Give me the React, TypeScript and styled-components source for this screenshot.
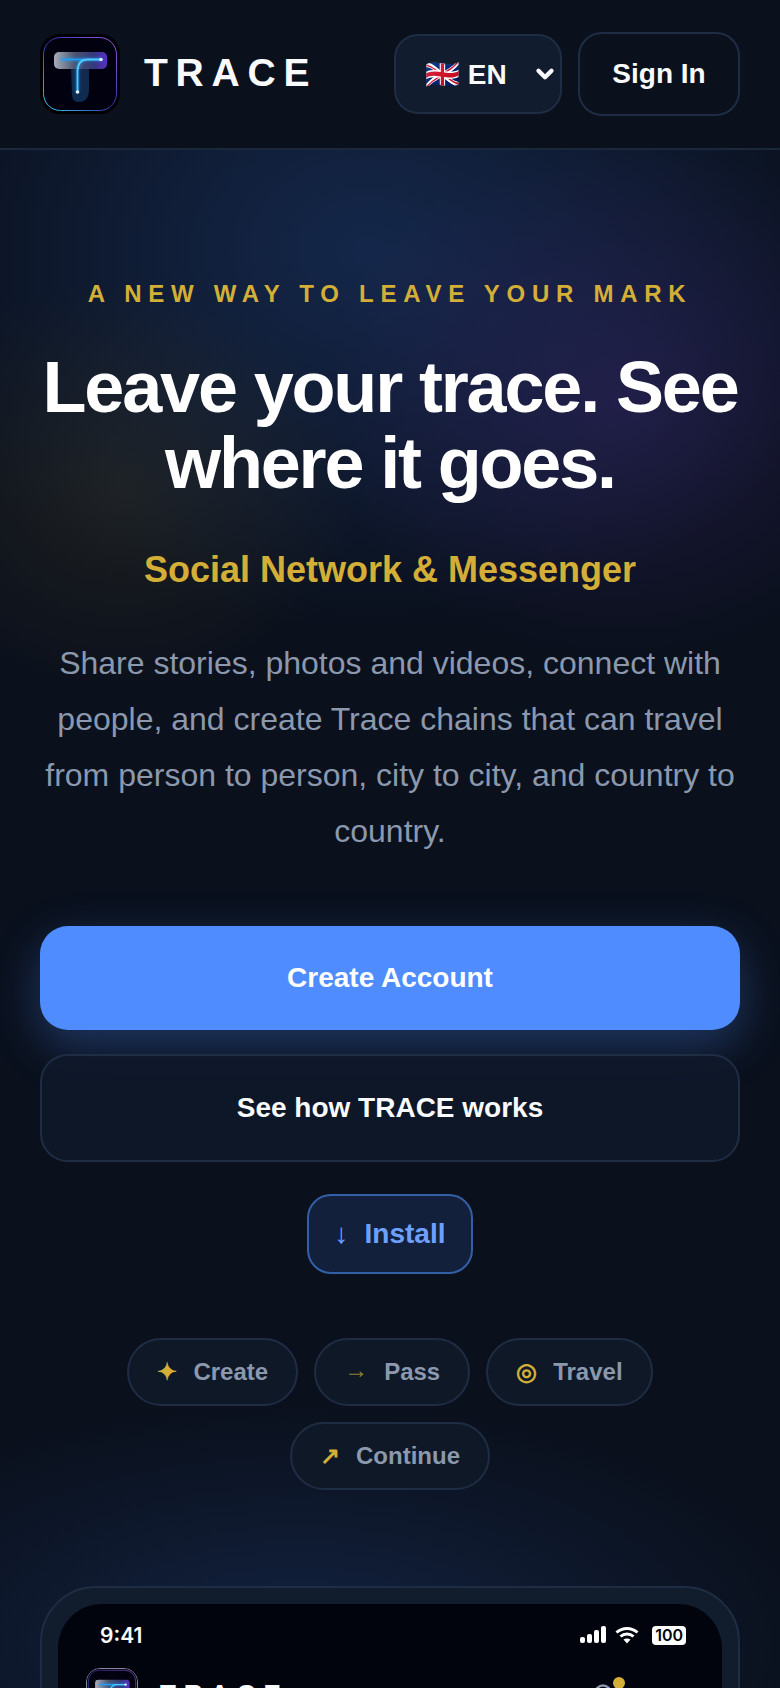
import React from "react";
import styled, { createGlobalStyle } from "styled-components";
import { Bell, ChevronDown, Menu } from "lucide-react";

const GlobalStyle = createGlobalStyle`
  html, body {
    margin: 0;
    padding: 0;
    background: #0a101c;
    font-family: "Liberation Sans", Arial, sans-serif;
  }
  * {
    box-sizing: border-box;
  }
`;

const Page = styled.div`
  width: 780px;
  height: 1688px;
  overflow: hidden;
  color: #f8fafc;
  background:
    radial-gradient(240px 210px at 120px 490px, rgba(72, 66, 40, 0.3), transparent 100%),
    radial-gradient(300px 260px at 620px 400px, rgba(60, 40, 112, 0.42), transparent 100%),
    radial-gradient(500px 380px at 370px 250px, rgba(24, 48, 92, 0.72), transparent 100%),
    radial-gradient(520px 240px at 300px 1640px, rgba(24, 46, 88, 0.6), transparent 100%),
    #0a101c;
`;

const Header = styled.header`
  height: 150px;
  padding: 32px 40px 0;
  display: flex;
  justify-content: space-between;
  align-items: flex-start;
  border-bottom: 2px solid #1b283b;
  background: #0a101c;
`;

const Brand = styled.div`
  display: flex;
  align-items: center;
  gap: 24px;
  margin-top: 2px;
`;

const BrandName = styled.span`
  padding-bottom: 3px;
  font-size: 39px;
  line-height: 76px;
  font-weight: 700;
  letter-spacing: 0.2em;
`;

const HeaderActions = styled.div`
  display: flex;
  align-items: center;
  gap: 16px;
`;

const LangWrap = styled.div`
  position: relative;
  width: 168px;
  height: 80px;
  color: #f8fafc;

  svg {
    position: absolute;
    top: 27px;
    right: 4px;
    pointer-events: none;
  }
`;

const LangSelect = styled.select`
  appearance: none;
  width: 100%;
  height: 100%;
  padding: 0 0 0 29px;
  border: 2px solid #1f2d44;
  border-radius: 24px;
  background: #111c2e;
  color: #f8fafc;
  font-family: inherit;
  font-size: 28px;
  font-weight: 700;
`;

const SignIn = styled.button`
  width: 162px;
  height: 84px;
  border: 2px solid #1f2d44;
  border-radius: 24px;
  background: transparent;
  color: #f8fafc;
  font-family: inherit;
  font-size: 28px;
  font-weight: 700;
`;

const Hero = styled.section`
  padding: 129px 40px 0;
  display: flex;
  flex-direction: column;
  align-items: center;
  text-align: center;
`;

const Kicker = styled.p`
  margin: 0;
  color: #d4af37;
  font-size: 24px;
  line-height: 30px;
  font-weight: 700;
  letter-spacing: 0.28em;
  white-space: nowrap;
`;

const Title = styled.h1`
  margin: 40px 0 0;
  font-size: 72px;
  line-height: 76px;
  font-weight: 700;
  letter-spacing: -0.03em;
  color: #ffffff;
`;

const Subtitle = styled.h2`
  margin: 46px 0 0;
  color: #d4af37;
  font-size: 36px;
  line-height: 46px;
  font-weight: 700;
`;

const Lead = styled.p`
  margin: 42px 0 0;
  color: #8b98ad;
  font-size: 32px;
  line-height: 56px;
`;

const PrimaryButton = styled.button`
  width: 100%;
  height: 104px;
  margin-top: 67px;
  border: 0;
  border-radius: 28px;
  background: #4f8cff;
  color: #ffffff;
  font-family: inherit;
  font-size: 28px;
  font-weight: 700;
  box-shadow: 0 16px 48px rgba(79, 140, 255, 0.32);
`;

const SecondaryButton = styled.button`
  position: relative;
  width: 100%;
  height: 108px;
  margin-top: 24px;
  border: 2px solid #1f2d44;
  border-radius: 28px;
  background: rgba(15, 25, 42, 0.85);
  color: #f8fafc;
  font-family: inherit;
  font-size: 28px;
  font-weight: 700;
`;

const InstallButton = styled.button`
  display: flex;
  align-items: center;
  gap: 16px;
  height: 80px;
  margin-top: 32px;
  padding: 0 26px;
  border: 2px solid #345fa6;
  border-radius: 24px;
  background: #12203c;
  color: #6ea0ff;
  font-family: inherit;
  font-size: 28px;
  font-weight: 700;
`;

const Chips = styled.div`
  display: flex;
  flex-wrap: wrap;
  justify-content: center;
  gap: 16px;
  margin-top: 64px;
`;

const Chip = styled.div`
  display: flex;
  align-items: center;
  gap: 16px;
  height: 68px;
  padding: 0 28px;
  border: 2px solid #1f2d44;
  border-radius: 34px;
  background: #0e1827;
  color: #8b98ad;
  font-size: 24px;
  font-weight: 700;
`;

const ChipIcon = styled.span<{ $dim?: boolean }>`
  color: #d4af37;
  opacity: ${(p) => (p.$dim ? 0.7 : 1)};
  margin-bottom: ${(p) => (p.$dim ? "5px" : "0")};
`;

const Phone = styled.div`
  width: 700px;
  height: 900px;
  margin: 96px 40px 0;
  padding: 16px;
  border: 2px solid #1f2d44;
  border-radius: 56px;
  background: #111c2c;
`;

const PhoneScreen = styled.div`
  height: 100%;
  padding: 0 36px 0 28px;
  border-radius: 44px;
  background: #02040d;
`;

const StatusBar = styled.div`
  height: 62px;
  padding-left: 14px;
  display: flex;
  justify-content: space-between;
  align-items: center;
`;

const Clock = styled.span`
  font-family: Inter, sans-serif;
  font-size: 21px;
  font-weight: 600;
`;

const StatusIcons = styled.div`
  display: flex;
  align-items: center;
  gap: 9px;
`;

const Battery = styled.span`
  margin-left: 4px;
  padding: 1px 3px;
  border-radius: 4px;
  background: #ffffff;
  color: #02040d;
  font-family: Inter, sans-serif;
  font-size: 16px;
  line-height: 17px;
  font-weight: 600;
`;

const PhoneHeader = styled.div`
  display: flex;
  align-items: center;
  gap: 22px;
  margin-top: 2px;
`;

const PhoneLogoFrame = styled.div`
  width: 52px;
  height: 52px;
  border: 1.5px solid #85849c;
  border-radius: 14px;
  overflow: hidden;
  background: #05031c;

  svg {
    display: block;
    margin: -1.5px;
  }
`;

const PhoneBrandName = styled.span`
  flex: 1;
  font-size: 26px;
  font-weight: 700;
  letter-spacing: 0.3em;
`;

const BellWrap = styled.span`
  position: relative;
  margin: 12px 16px 0 0;
  color: #8b98ad;
`;

const BellDot = styled.span`
  position: absolute;
  top: -6px;
  right: -7px;
  width: 12px;
  height: 12px;
  border-radius: 50%;
  background: #d4af37;
`;

const MenuIcon = styled(Menu)`
  margin-top: 10px;
  color: #8b98ad;
`;

const Logo = ({ size, id }: { size: number; id: string }) => (
  <svg width={size} height={size} viewBox="0 0 80 80">
    <defs>
      <linearGradient id={`${id}-rim`} x1="0" y1="1" x2="1" y2="0">
        <stop offset="0" stopColor="#3cd0f8" />
        <stop offset="0.5" stopColor="#2f35b0" />
        <stop offset="1" stopColor="#a055e8" />
      </linearGradient>
      <linearGradient id={`${id}-bar`} x1="0" y1="0" x2="1" y2="0">
        <stop offset="0" stopColor="#a8aeba" />
        <stop offset="0.4" stopColor="#4a5470" />
        <stop offset="0.75" stopColor="#33387c" />
        <stop offset="1" stopColor="#5a30c8" />
      </linearGradient>
      <linearGradient id={`${id}-stem`} x1="0" y1="0" x2="0" y2="1">
        <stop offset="0" stopColor="#14284e" />
        <stop offset="1" stopColor="#0e2c52" />
      </linearGradient>
      <filter id={`${id}-glow`} x="-30%" y="-30%" width="160%" height="160%">
        <feGaussianBlur stdDeviation="1.500" />
      </filter>
    </defs>
    <rect width="80" height="80" rx="20" fill="#000" />
    <rect x="3.500" y="3.500" width="73" height="73" rx="17" fill="#01010f" stroke={`url(#${id}-rim)`} strokeWidth="1" />
    <path d="M31 33h18v22c0 8-3 13-10 13-5 0-7-3-7-8z" fill={`url(#${id}-stem)`} />
    <rect x="14" y="18" width="53" height="17" rx="5" fill={`url(#${id}-bar)`} />
    <path
      d="M21 25.500H61M47 25.500c-6 0-9 4-9.500 11L37.500 58"
      stroke="#1a9cff"
      strokeWidth="3"
      strokeOpacity="0.6"
      fill="none"
      filter={`url(#${id}-glow)`}
    />
    <path d="M21 25.500H61" stroke="#16a4ff" strokeWidth="1.500" fill="none" />
    <path d="M61 25.500H47c-6 0-9 4-9.500 11L37.500 58" stroke="#4cccff" strokeWidth="1.800" fill="none" />
    <circle cx="61" cy="25.500" r="1.800" fill="#dff6ff" />
    <circle cx="37.500" cy="58" r="1.800" fill="#dff6ff" />
  </svg>
);

const SignalIcon = () => (
  <svg width="26" height="18" viewBox="0 0 26 18" fill="#fff">
    <rect x="0" y="11" width="5" height="6" rx="2" />
    <rect x="7" y="8" width="5" height="9" rx="2" />
    <rect x="14" y="4" width="5" height="13" rx="2" />
    <rect x="21" y="0" width="5" height="17" rx="2" />
  </svg>
);

const WifiIcon = () => (
  <svg width="24" height="18" viewBox="0 0 24 18" fill="none" stroke="#fff" strokeWidth="3">
    <path d="M1.500 6.500C7.500 1 16.500 1 22.500 6.500" />
    <path d="M5.500 10.500C9.300 7 14.700 7 18.500 10.500" />
    <path d="M12 17.500 8.500 13.500C10.500 12 13.500 12 15.500 13.500Z" fill="#fff" stroke="none" />
  </svg>
);

const chips = [
  { icon: "✦", label: "Create" },
  { icon: "→", label: "Pass", dim: true },
  { icon: "◎", label: "Travel" },
  { icon: "↗", label: "Continue" },
];

export default function App() {
  return (
    <Page>
      <GlobalStyle />
      <Header>
        <Brand>
          <Logo size={80} id="main" />
          <BrandName>TRACE</BrandName>
        </Brand>
        <HeaderActions>
          <LangWrap>
            <LangSelect defaultValue="en">
              <option value="en">🇬🇧 EN</option>
            </LangSelect>
            <ChevronDown size={26} strokeWidth={4} />
          </LangWrap>
          <SignIn>Sign In</SignIn>
        </HeaderActions>
      </Header>
      <Hero>
        <Kicker>A NEW WAY TO LEAVE YOUR MARK</Kicker>
        <Title>Leave your trace. See where it goes.</Title>
        <Subtitle>Social Network &amp; Messenger</Subtitle>
        <Lead>
          Share stories, photos and videos, connect with people, and create Trace chains that can
          travel from person to person, city to city, and country to country.
        </Lead>
        <PrimaryButton>Create Account</PrimaryButton>
        <SecondaryButton>See how TRACE works</SecondaryButton>
        <InstallButton>
          <span>↓</span>
          Install
        </InstallButton>
        <Chips>
          {chips.map((chip) => (
            <Chip key={chip.label}>
              <ChipIcon $dim={chip.dim}>{chip.icon}</ChipIcon>
              {chip.label}
            </Chip>
          ))}
        </Chips>
      </Hero>
      <Phone>
        <PhoneScreen>
          <StatusBar>
            <Clock>9:41</Clock>
            <StatusIcons>
              <SignalIcon />
              <WifiIcon />
              <Battery>100</Battery>
            </StatusIcons>
          </StatusBar>
          <PhoneHeader>
            <PhoneLogoFrame>
              <Logo size={52} id="phone" />
            </PhoneLogoFrame>
            <PhoneBrandName>TRACE</PhoneBrandName>
            <BellWrap>
              <Bell size={30} />
              <BellDot />
            </BellWrap>
            <MenuIcon size={30} />
          </PhoneHeader>
        </PhoneScreen>
      </Phone>
    </Page>
  );
}
